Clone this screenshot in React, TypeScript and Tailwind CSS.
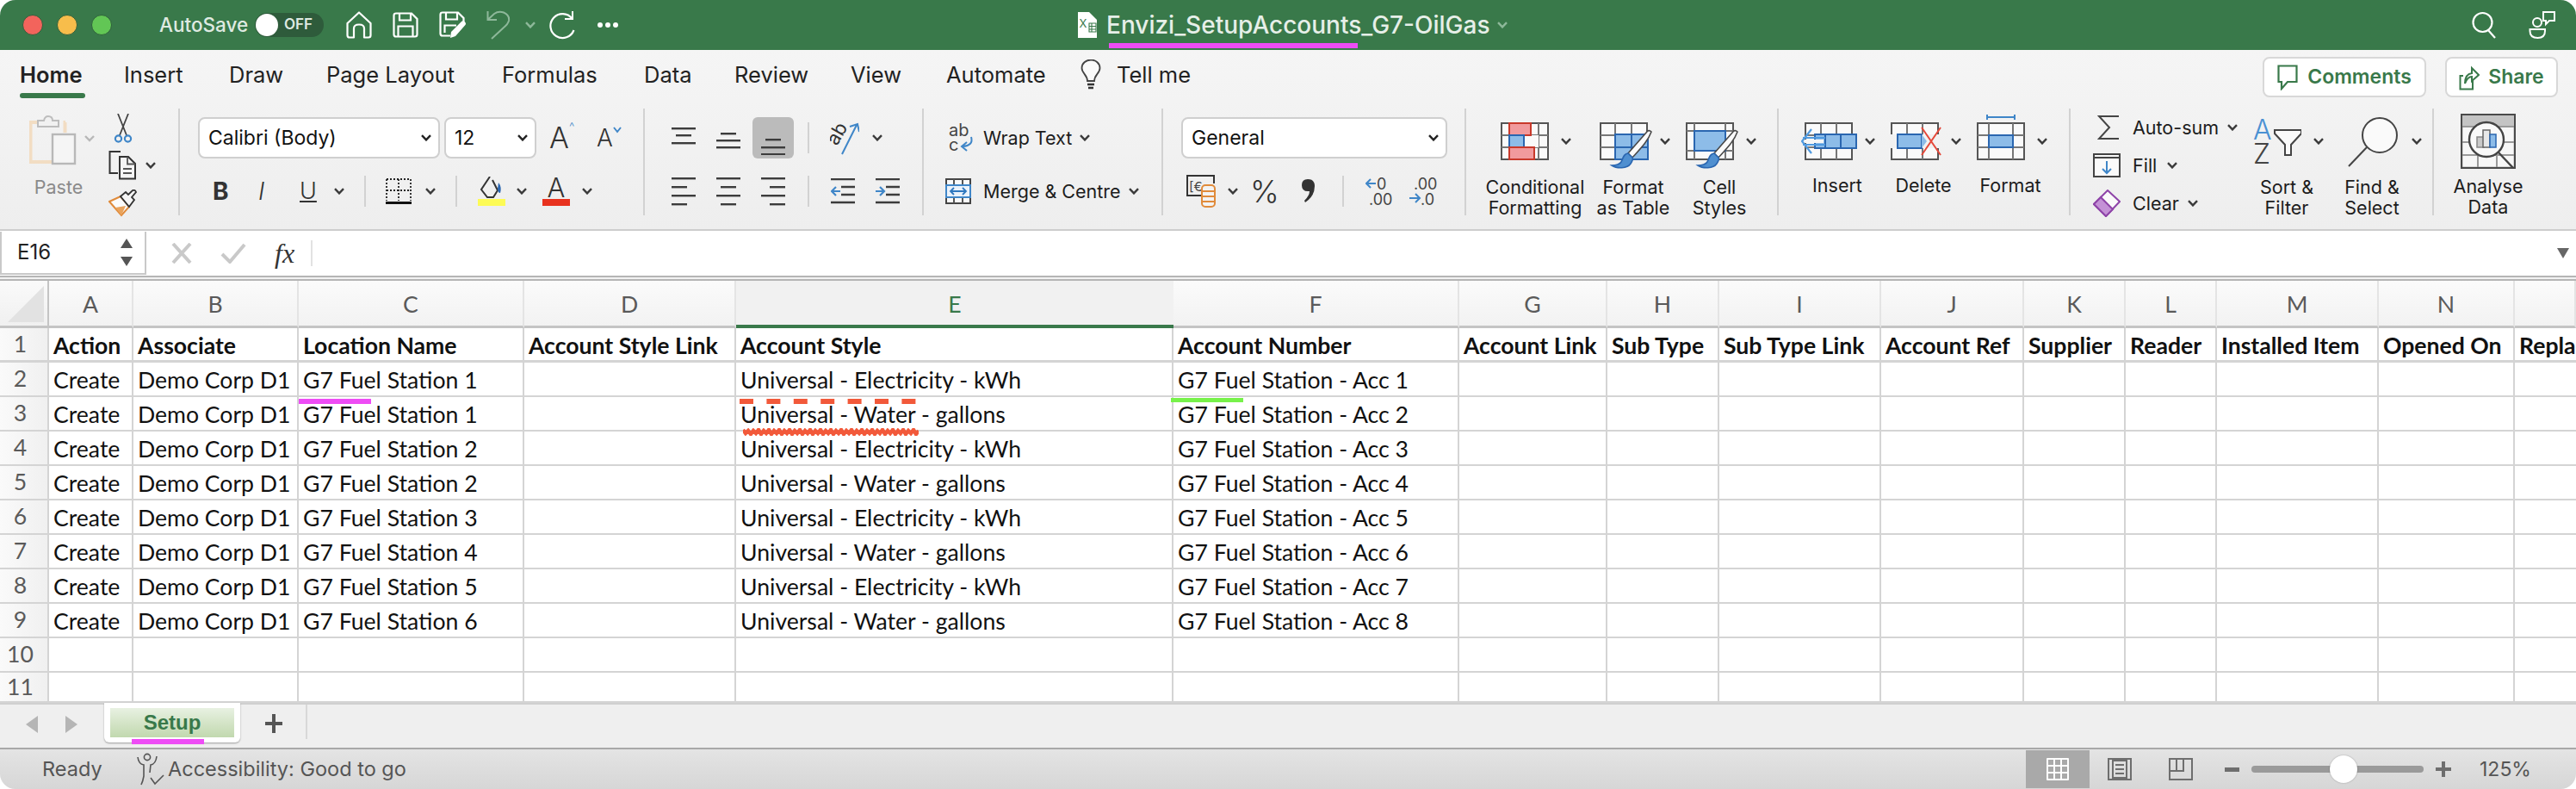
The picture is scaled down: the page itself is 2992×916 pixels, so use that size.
import React from "react";

const Chev = ({ c = "#3a3a3a", className = "" }: { c?: string; className?: string }) => (
  <svg width="12" height="8" viewBox="0 0 12 8" className={"shrink-0 " + className}>
    <path d="M1 1.2 L6 6.4 L11 1.2" fill="none" stroke={c} strokeWidth="2.4" />
  </svg>
);

const Lines = ({ ys, ws, align }: { ys: number[]; ws: number[]; align: "l" | "c" | "r" }) => (
  <svg width="28" height="40" viewBox="0 0 28 40" className="shrink-0">
    {ys.map((y, i) => {
      const x = align === "l" ? 0 : align === "c" ? (28 - ws[i]) / 2 : 28 - ws[i];
      return <rect key={i} x={x} y={y} width={ws[i]} height="2.4" fill="#3c3c3c" />;
    })}
  </svg>
);

const GridBase = ({ rows = [15, 29], cols = [10, 28, 46] }: { rows?: number[]; cols?: number[] }) => (
  <>
    <rect x="1" y="1" width="54" height="42" fill="#fafafa" stroke="#555" strokeWidth="2" />
    {rows.map((r) => <path key={r} d={`M1 ${r} H55`} stroke="#777" strokeWidth="2" />)}
    {cols.map((c) => <path key={c} d={`M${c} 1 V43`} stroke="#777" strokeWidth="2" />)}
  </>
);

const Brush = ({ x = 0 }: { x?: number }) => (
  <g transform={`translate(${x} 0)`}>
    <path d="M60 11 C58 9 56 9 54 12 L33 36 L38 41 C48 30 56 22 60 11 Z" fill="#fbfbfb" stroke="#4a4a4a" strokeWidth="1.6" />
    <path d="M33 36 C28 36 27 42 25 46 C23 49 19 50 14 50 C20 54 32 54 36 48 C38 45 39 43 38 41 Z" fill="#4f8fd0" stroke="#2a66b0" strokeWidth="1.6" />
  </g>
);

const IconHome = () => (
  <svg width="30" height="32" viewBox="0 0 30 32" className="shrink-0">
    <path d="M1.5 14 L15 1.5 L28.5 14 V28 Q28.5 30.5 26 30.5 H21 V20 Q21 15.5 15 15.5 Q9 15.5 9 20 V30.5 H4 Q1.5 30.5 1.5 28 Z" fill="none" stroke="#fff" strokeWidth="2.2" strokeLinejoin="round" />
  </svg>
);
const IconSave = () => (
  <svg width="30" height="30" viewBox="0 0 30 30" className="shrink-0">
    <path d="M4 1.5 H22 L28.5 8 V26 Q28.5 28.5 26 28.5 H4 Q1.5 28.5 1.5 26 V4 Q1.5 1.5 4 1.5 Z" fill="none" stroke="#fff" strokeWidth="2.2" />
    <path d="M8 1.5 V9.5 H21 V1.5 M6.5 28.5 V16.5 H23.5 V28.5" fill="none" stroke="#fff" strokeWidth="2.2" />
  </svg>
);
const IconSaveAs = () => (
  <svg width="32" height="32" viewBox="0 0 32 32" className="shrink-0">
    <path d="M13 28.5 H4 Q1.5 28.5 1.5 26 V4 Q1.5 1.5 4 1.5 H22 L28.5 8 V13" fill="none" stroke="#fff" strokeWidth="2.2" />
    <path d="M8 1.5 V9.5 H21 V1.5 M6.5 25 V16.5 H20" fill="none" stroke="#fff" strokeWidth="2.2" />
    <path d="M14 24 L26 12 Q28 10.5 30 12.5 Q32 14.5 30 16.5 L19 29 L13 31 Z" fill="#fff" />
  </svg>
);
const IconUndo = () => (
  <svg width="28" height="34" viewBox="0 0 28 34" className="shrink-0">
    <path d="M1.5 1 V11 H12 M2 10.5 L9 4 Q14 0.5 20 2.5 Q27 5.5 26 12 Q25 16 20 20 L6 33" fill="none" stroke="#8eb89a" strokeWidth="2" />
  </svg>
);
const IconRedo = () => (
  <svg width="32" height="34" viewBox="0 0 32 34" className="shrink-0">
    <path d="M28 1 V10 H19" fill="none" stroke="#fff" strokeWidth="2" />
    <path d="M27.5 9.5 A14 14 0 1 0 29.5 23" fill="none" stroke="#fff" strokeWidth="2.2" />
  </svg>
);
const IconDoc = () => (
  <svg width="26" height="30" viewBox="0 0 26 30" className="shrink-0">
    <path d="M2 0 H15 L24 9 V30 H2 Z" fill="#fff" />
    <text x="3.5" y="18" fontSize="13" fill="#39794a" fontFamily="Inter, sans-serif">X</text>
    <path d="M15 13 H23 V23 H15 Z M18 13 V23 M15 16.5 H23 M15 20 H23" fill="none" stroke="#39794a" strokeWidth="1.1" />
  </svg>
);
const IconSearch = () => (
  <svg width="30" height="32" viewBox="0 0 30 32" className="shrink-0">
    <circle cx="12.5" cy="13" r="11" fill="none" stroke="#fff" strokeWidth="2.2" />
    <path d="M19 22 L27 31" stroke="#fff" strokeWidth="2.2" />
  </svg>
);
const IconPeople = () => (
  <svg width="32" height="32" viewBox="0 0 32 32" className="shrink-0">
    <circle cx="10" cy="13" r="5" fill="none" stroke="#fff" strokeWidth="2" />
    <path d="M1.5 21 H19 V23 Q19 31 10.5 31 Q1.5 31 1.5 23 Z" fill="none" stroke="#fff" strokeWidth="2" />
    <path d="M17 1 H30 V11 H24 L20 15 V11 H17 Z" fill="none" stroke="#fff" strokeWidth="2" />
  </svg>
);

const IconPaste = () => (
  <svg width="76" height="62" viewBox="0 0 76 62" className="shrink-0 self-start">
    <path d="M10 8 H1.5 V54 H27" fill="none" stroke="#f2ddc3" strokeWidth="4" />
    <path d="M42 8 H41.5 V20" fill="none" stroke="#f2ddc3" strokeWidth="4" />
    <path d="M10 4 H17 Q18 -1 22 -1 Q27 -1 27 4 H34 V11 H10 Z" transform="translate(0 2)" fill="#f1f1f1" stroke="#bdbdbd" strokeWidth="2" />
    <rect x="27" y="22" width="26" height="34" fill="#f5f5f5" stroke="#b8b8b8" strokeWidth="2.4" />
    <path d="M65 24 L70 29 L75 24" fill="none" stroke="#b8b8b8" strokeWidth="2.4" />
  </svg>
);
const IconScissors = () => (
  <svg width="22" height="34" viewBox="0 0 22 34" className="shrink-0">
    <path d="M5 0 L15 25 M17 0 L7 25" stroke="#444" strokeWidth="1.8" fill="none" />
    <circle cx="5.5" cy="29" r="3.6" fill="none" stroke="#3f86c8" strokeWidth="2.2" />
    <circle cx="16.5" cy="29" r="3.6" fill="none" stroke="#3f86c8" strokeWidth="2.2" />
  </svg>
);
const IconCopy = () => (
  <svg width="32" height="34" viewBox="0 0 32 34" className="shrink-0">
    <path d="M14 1 H1.5 V26 H11" fill="none" stroke="#333" strokeWidth="2" />
    <path d="M13 7 H23 L31 15 V32.5 H13 Z" fill="#f5f5f5" stroke="#333" strokeWidth="2" />
    <path d="M22 7 V15.5 H31 M17 21 H27 M17 26 H27" fill="none" stroke="#555" strokeWidth="1.8" />
  </svg>
);
const IconPainter = () => (
  <svg width="34" height="32" viewBox="0 0 34 32" className="shrink-0">
    <path d="M1 14 L14 8 L24 20 L15 30 Z" fill="#fbfbfb" stroke="#e08b3b" strokeWidth="2" />
    <path d="M8 21 L20 19 L15 30 Z" fill="#e9a35c" />
    <path d="M14 8 L20 3 L23 6 L28 1 Q31 0 32 3 L27 9 L30 12 L24 20 Z" fill="#f5f5f5" stroke="#333" strokeWidth="1.8" />
  </svg>
);
const IconBorders = () => (
  <svg width="30" height="30" viewBox="0 0 30 30" className="shrink-0">
    <path d="M1 1 H29 V26 M1 1 V26 M15 1 V26 M1 14 H29" fill="none" stroke="#222" strokeWidth="1.8" strokeDasharray="2 2" />
    <rect x="0" y="27" width="30" height="3" fill="#111" />
  </svg>
);
const IconFill = () => (
  <svg width="32" height="34" viewBox="0 0 32 34" className="shrink-0">
    <path d="M14 0 L4 15 L11 24 H18 L23 16 L17 4" fill="none" stroke="#333" strokeWidth="2" />
    <path d="M24 7 Q28 12 26 19 Q23 19 23 14 Z" fill="#2a66b0" />
    <rect x="0" y="26" width="32" height="8" fill="#fdfb55" />
  </svg>
);
const IconOrient = () => (
  <svg width="34" height="42" viewBox="0 0 34 42" className="shrink-0">
    <text x="0" y="0" fontSize="22" fill="#333" fontFamily="Inter, sans-serif" transform="translate(8 31) rotate(-60)">ab</text>
    <path d="M14 40 L31 6 M23 8 L32 5 L34 14" fill="none" stroke="#3f86c8" strokeWidth="2" />
  </svg>
);
const IconIndent = ({ out }: { out?: boolean }) => (
  <svg width="28" height="30" viewBox="0 0 28 30" className="shrink-0">
    <path d="M0 1 H28 M12 10 H28 M12 19 H28 M0 28 H28" stroke="#3c3c3c" strokeWidth="2.4" />
    {out ? (
      <path d="M11 15 H1 M6 10 L1 15 L6 20" fill="none" stroke="#3f86c8" strokeWidth="2.2" />
    ) : (
      <path d="M0 15 H10 M5 10 L10 15 L5 20" fill="none" stroke="#3f86c8" strokeWidth="2.2" />
    )}
  </svg>
);
const IconWrap = () => (
  <svg width="30" height="34" viewBox="0 0 30 34" className="shrink-0">
    <text x="0" y="15" fontSize="20" fill="#444" fontFamily="Inter, sans-serif">ab</text>
    <text x="0" y="32" fontSize="20" fill="#444" fontFamily="Inter, sans-serif">c</text>
    <path d="M26 16 Q29 26 16 27 M21 22 L15 27 L21 32" fill="none" stroke="#3f86c8" strokeWidth="2" />
  </svg>
);
const IconMerge = () => (
  <svg width="30" height="30" viewBox="0 0 30 30" className="shrink-0">
    <rect x="1" y="1" width="28" height="28" fill="#fafafa" stroke="#444" strokeWidth="2" />
    <path d="M10 1 V8 M20 1 V8 M10 22 V29 M20 22 V29" stroke="#555" strokeWidth="2" />
    <rect x="1" y="8" width="28" height="14" fill="#eaf2fb" stroke="#3f86c8" strokeWidth="2" />
    <path d="M6 15 H24 M10 11 L6 15 L10 19 M20 11 L24 15 L20 19" fill="none" stroke="#2f78bf" strokeWidth="1.8" />
  </svg>
);
const IconAccounting = () => (
  <svg width="34" height="38" viewBox="0 0 34 38" className="shrink-0">
    <path d="M22 24 H1 V1 H32 V10" fill="none" stroke="#333" strokeWidth="2" />
    <text x="3" y="19" fontSize="15" fill="#444" fontFamily="Inter, sans-serif">[€</text>
    <rect x="18" y="12" width="15" height="25" rx="4" fill="#f3f3f3" stroke="#e08b3b" strokeWidth="2" />
    <path d="M18 19 H33 M18 25 H33 M18 31 H33" stroke="#e08b3b" strokeWidth="2" />
  </svg>
);
const IconComma = () => (
  <svg width="18" height="30" viewBox="0 0 18 30" className="shrink-0">
    <path d="M8 1 Q16 1 16 9 Q16 21 5 28 L4 26 Q10 20 10 15 Q1 16 1 8 Q1 1 8 1 Z" fill="#333" />
  </svg>
);
const IconDecInc = () => (
  <svg width="32" height="34" viewBox="0 0 32 34" className="shrink-0">
    <path d="M12 8 H1 M6 3 L1 8 L6 13" fill="none" stroke="#3f86c8" strokeWidth="2" />
    <text x="13" y="15" fontSize="18" fill="#444" fontFamily="Inter, sans-serif">0</text>
    <text x="4" y="33" fontSize="18" fill="#444" fontFamily="Inter, sans-serif">.00</text>
  </svg>
);
const IconDecDec = () => (
  <svg width="34" height="34" viewBox="0 0 34 34" className="shrink-0">
    <text x="6" y="15" fontSize="18" fill="#444" fontFamily="Inter, sans-serif">.00</text>
    <path d="M1 25 H13 M8 20 L13 25 L8 30" fill="none" stroke="#3f86c8" strokeWidth="2" />
    <text x="14" y="33" fontSize="18" fill="#444" fontFamily="Inter, sans-serif">.0</text>
  </svg>
);
const IconCF = () => (
  <svg width="56" height="44" viewBox="0 0 56 44" className="shrink-0">
    <GridBase rows={[15, 29]} cols={[10, 44]} />
    <rect x="27" y="15" width="17" height="14" fill="#fafafa" />
    <rect x="10" y="1" width="25" height="14" fill="#f19a9d" stroke="#c8392b" strokeWidth="2" />
    <rect x="10" y="15" width="17" height="14" fill="#8dbce8" stroke="#2a66b0" strokeWidth="2" />
    <rect x="10" y="29" width="29" height="14" fill="#f19a9d" stroke="#c8392b" strokeWidth="2" />
  </svg>
);
const IconFT = () => (
  <svg width="62" height="54" viewBox="0 0 62 54" className="shrink-0">
    <GridBase rows={[15, 29]} cols={[18, 37]} />
    <rect x="18" y="14" width="38" height="29" fill="#8dbce8" stroke="#2a66b0" strokeWidth="2" />
    <path d="M18 29 H56 M37 14 V43" stroke="#2a66b0" strokeWidth="2" />
    <Brush />
  </svg>
);
const IconCS = () => (
  <svg width="62" height="54" viewBox="0 0 62 54" className="shrink-0">
    <GridBase rows={[10, 33]} cols={[10, 46]} />
    <rect x="10" y="10" width="36" height="23" fill="#8dbce8" stroke="#2a66b0" strokeWidth="2" />
    <Brush />
  </svg>
);
const IconInsert = () => (
  <svg width="66" height="44" viewBox="0 0 66 44" className="shrink-0">
    <g transform="translate(4 0)"><GridBase rows={[15, 29]} cols={[19, 37]} /></g>
    <rect x="16" y="14" width="48" height="16" fill="#8dbce8" stroke="#2a66b0" strokeWidth="2" />
    <path d="M28 14 V30 M46 14 V30" stroke="#2a66b0" strokeWidth="2" />
    <path d="M12 8 L1 22 L12 36 M2 18 H28 M2 26 H28" fill="none" stroke="#4f9ae0" strokeWidth="2.2" />
    <path d="M4 22 H26" stroke="#f5f5f5" strokeWidth="4" />
  </svg>
);
const IconDelete = () => (
  <svg width="60" height="44" viewBox="0 0 60 44" className="shrink-0">
    <path d="M1 14 V1 H55 V14 M1 30 V43 H55 V30" fill="#fafafa" stroke="#555" strokeWidth="2" />
    <path d="M19 1 V14 M37 1 V14 M19 30 V43 M37 30 V43" stroke="#777" strokeWidth="2" />
    <rect x="8" y="14" width="28" height="16" fill="#8dbce8" stroke="#2a66b0" strokeWidth="2" />
    <path d="M36 14 L42 22 L36 30 Z" fill="#8dbce8" />
    <path d="M36 6 L58 38 M58 6 L36 38" stroke="#e5493a" strokeWidth="2" />
  </svg>
);
const IconFormat = () => (
  <svg width="56" height="54" viewBox="0 0 56 54" className="shrink-0">
    <path d="M12 1 V7 M44 1 V7 M12 4 H44" stroke="#3f86c8" strokeWidth="2" />
    <g transform="translate(0 10)">
      <GridBase rows={[15, 29]} cols={[14, 42]} />
      <rect x="14" y="15" width="28" height="14" fill="#8dbce8" stroke="#2a66b0" strokeWidth="2" />
    </g>
  </svg>
);
const IconSigma = () => (
  <svg width="26" height="30" viewBox="0 0 26 30" className="shrink-0">
    <path d="M25 2 H2 L14 15 L2 28 H25" fill="none" stroke="#444" strokeWidth="2" />
  </svg>
);
const IconFillDown = () => (
  <svg width="32" height="28" viewBox="0 0 32 28" className="shrink-0">
    <rect x="1" y="1" width="30" height="26" fill="#fafafa" stroke="#444" strokeWidth="2" />
    <path d="M1 5 H31" stroke="#444" strokeWidth="2" />
    <path d="M16 9 V23 M11 18 L16 23 L21 18" fill="none" stroke="#3f86c8" strokeWidth="2" />
  </svg>
);
const IconClear = () => (
  <svg width="32" height="32" viewBox="0 0 32 32" className="shrink-0">
    <path d="M17 1 L31 14 L15 31 L1 17 Z" fill="#fafafa" stroke="#8e44a8" strokeWidth="2" />
    <path d="M1 17 L9 9 L23 23 L15 31 Z" fill="#c491d6" stroke="#8e44a8" strokeWidth="2" />
  </svg>
);
const IconSort = () => (
  <svg width="56" height="54" viewBox="0 0 56 54" className="shrink-0">
    <text x="0" y="26" fontSize="32" fill="#4a90d2" fontFamily="Inter, sans-serif" fontWeight="300">A</text>
    <text x="0" y="54" fontSize="32" fill="#444" fontFamily="Inter, sans-serif" fontWeight="300">Z</text>
    <path d="M25 15 H56 V19 L44 32 V44 H37 V32 L25 19 Z" fill="#fafafa" stroke="#444" strokeWidth="2" />
  </svg>
);
const IconFind = () => (
  <svg width="60" height="58" viewBox="0 0 60 58" className="shrink-0">
    <circle cx="37" cy="21" r="20" fill="#fafafa" stroke="#444" strokeWidth="2" />
    <path d="M22 35 L1 57" stroke="#444" strokeWidth="2" />
  </svg>
);
const IconAnalyse = () => (
  <svg width="64" height="64" viewBox="0 0 64 64" className="shrink-0">
    <rect x="1" y="1" width="62" height="62" fill="#f7f7f7" stroke="#4a4a4a" strokeWidth="2.4" />
    <rect x="2" y="2" width="60" height="13" fill="#c4c4c4" />
    <path d="M2 15 H62 M2 33 H62 M2 48 H62 M20 15 V62 M42 15 V62" stroke="#9a9a9a" strokeWidth="2" />
    <circle cx="30" cy="30" r="20" fill="#f9f9f9" stroke="#444" strokeWidth="2.4" />
    <rect x="19" y="27" width="8" height="12" fill="#c9c9c9" stroke="#888" strokeWidth="1.5" />
    <rect x="26" y="19" width="8" height="20" fill="#e8e8e8" stroke="#666" strokeWidth="1.5" />
    <rect x="34" y="24" width="7" height="15" fill="#8dbce8" stroke="#2a66b0" strokeWidth="1.5" />
    <path d="M44 45 L62 64" stroke="#444" strokeWidth="2.4" />
  </svg>
);
const IconBulb = () => (
  <svg width="24" height="36" viewBox="0 0 24 36" className="shrink-0">
    <path d="M8 25 C8 18 1.5 16 1.5 10 A10.5 9.5 0 0 1 22.5 10 C22.5 16 16 18 16 25 Z" fill="#fafafa" stroke="#444" strokeWidth="1.8" />
    <path d="M8 29 H16 M9 33 H15" stroke="#333" strokeWidth="2.4" />
  </svg>
);
const IconComment = () => (
  <svg width="24" height="30" viewBox="0 0 24 30" className="shrink-0">
    <path d="M1.5 1.5 H22.5 V20 H12 L5 28 V20 H1.5 Z" fill="#fff" stroke="#39794a" strokeWidth="2.2" />
  </svg>
);
const IconShare = () => (
  <svg width="24" height="30" viewBox="0 0 24 30" className="shrink-0">
    <path d="M16 13 V28.5 H1.5 V13 H5" fill="none" stroke="#39794a" strokeWidth="2" />
    <path d="M7 22 Q7 11 15 10 V4 L23 12 L15 19 V14 Q10 14 7 22 Z" fill="#fff" stroke="#39794a" strokeWidth="2" />
  </svg>
);
const IconA11y = () => (
  <svg width="34" height="40" viewBox="0 0 34 40" className="shrink-0">
    <circle cx="13" cy="6" r="3.6" fill="none" stroke="#555" strokeWidth="1.6" />
    <path d="M2 6 Q3 14 9 15 L9 28 Q8 34 6 38 M24 5 Q23 14 17 15 L16 24" fill="none" stroke="#555" strokeWidth="1.6" />
    <path d="M17 30 L22 37 L32 27" fill="none" stroke="#555" strokeWidth="1.6" />
  </svg>
);

const Sep = () => <div className="w-[2px] h-[36px] bg-[#d2d2d2] shrink-0" />;

const Select = ({ w, label }: { w: string; label: string }) => (
  <div className={`${w} h-[48px] bg-white border-2 border-[#cfcfcf] rounded-[8px] flex items-center justify-between pl-[10px] pr-[8px] text-[23px] text-[#111] shrink-0`}>
    <span>{label}</span>
    <Chev c="#222" />
  </div>
);

const Ribbon = () => (
  <div className="flex h-[124px] text-[21.5px] text-[#1c1c1c] leading-[24px]">
    {/* Clipboard */}
    <div className="flex w-[209px] border-r-2 border-[#d2d2d2] shrink-0">
      <div className="ml-[34px] w-[68px] flex flex-col items-center pt-[8px]">
        <IconPaste />
        <span className="mt-[9px] text-[#8a8a8a]">Paste</span>
      </div>
      <div className="ml-[24px] flex flex-col">
        <div className="ml-[6px] mt-[6px] h-[44px] shrink-0"><IconScissors /></div>
        <div className="flex items-center h-[32px] shrink-0">
          <IconCopy />
          <Chev className="ml-[11px]" />
        </div>
        <div className="mt-[12px]"><IconPainter /></div>
      </div>
    </div>
    {/* Font */}
    <div className="flex flex-col w-[540px] border-r-2 border-[#d2d2d2] shrink-0">
      <div className="flex items-center h-[48px] mt-[10px]">
        <Select w="ml-[21px] w-[281px]" label="Calibri (Body)" />
        <Select w="ml-[5px] w-[107px]" label="12" />
        <div className="ml-[15px] w-[30px] flex items-start text-[34px] font-light leading-[40px] text-[#333]">A<span className="text-[14px] leading-[14px] text-[#3f86c8]">^</span></div>
        <div className="ml-[25px] w-[30px] flex items-start text-[28px] font-light leading-[40px] text-[#333]">A<svg width="10" height="10" viewBox="0 0 10 10" className="mt-[6px]"><path d="M1 2 L5 7 L9 2" fill="none" stroke="#3f86c8" strokeWidth="2" /></svg></div>
      </div>
      <div className="flex items-center h-[36px] mt-[20px]">
        <span className="ml-[38px] w-[16px] text-[28px] font-bold text-[#333]">B</span>
        <span className="ml-[37px] w-[12px] text-[28px] italic font-light text-[#333]">I</span>
        <span className="ml-[36px] w-[18px] text-[27px] font-light underline text-[#333]">U</span>
        <Chev className="ml-[22px]" />
        <div className="ml-[23px]"><Sep /></div>
        <div className="ml-[23px]"><IconBorders /></div>
        <Chev className="ml-[16px]" />
        <div className="ml-[23px]"><Sep /></div>
        <div className="ml-[24px]"><IconFill /></div>
        <Chev className="ml-[13px]" />
        <div className="ml-[18px] w-[32px] flex flex-col items-center">
          <span className="text-[31px] font-light leading-[26px] h-[26px] text-[#333]">A</span>
          <div className="w-[32px] h-[8px] bg-[#e8321f]" />
        </div>
        <Chev className="ml-[14px]" />
      </div>
    </div>
    {/* Alignment */}
    <div className="flex flex-col w-[324px] border-r-2 border-[#d2d2d2] shrink-0">
      <div className="flex items-center h-[48px] mt-[10px]">
        <div className="ml-[31px]"><Lines ys={[8, 16, 25]} ws={[28, 18, 28]} align="c" /></div>
        <div className="ml-[24px]"><Lines ys={[14, 22, 30]} ws={[18, 28, 28]} align="c" /></div>
        <div className="ml-[14px] w-[48px] h-[48px] rounded-[6px] bg-[#bbbbbb] flex items-center justify-center"><Lines ys={[21, 30, 38]} ws={[18, 28, 28]} align="c" /></div>
        <div className="ml-[16px]"><Sep /></div>
        <div className="ml-[24px]"><IconOrient /></div>
        <Chev className="ml-[15px]" />
      </div>
      <div className="flex items-center h-[36px] mt-[20px]">
        <div className="ml-[31px]"><Lines ys={[4, 14, 24, 34]} ws={[28, 18, 28, 18]} align="l" /></div>
        <div className="ml-[24px]"><Lines ys={[4, 14, 24, 34]} ws={[28, 18, 28, 18]} align="c" /></div>
        <div className="ml-[24px]"><Lines ys={[4, 14, 24, 34]} ws={[28, 18, 28, 18]} align="r" /></div>
        <div className="ml-[26px]"><Sep /></div>
        <div className="ml-[25px]"><IconIndent out /></div>
        <div className="ml-[24px]"><IconIndent /></div>
      </div>
    </div>
    {/* Wrap / merge */}
    <div className="flex flex-col w-[278px] border-r-2 border-[#d2d2d2] shrink-0">
      <div className="flex items-center h-[48px] mt-[10px]">
        <div className="ml-[29px]"><IconWrap /></div>
        <span className="ml-[10px] w-[112px]">Wrap Text</span>
        <Chev />
      </div>
      <div className="flex items-center h-[36px] mt-[20px]">
        <div className="ml-[25px]"><IconMerge /></div>
        <span className="ml-[14px] w-[169px]">Merge &amp; Centre</span>
        <Chev />
      </div>
    </div>
    {/* Number */}
    <div className="flex flex-col w-[352px] border-r-2 border-[#d2d2d2] shrink-0">
      <div className="flex items-center h-[48px] mt-[10px]">
        <Select w="ml-[21px] w-[309px]" label="General" />
      </div>
      <div className="flex items-center h-[36px] mt-[20px]">
        <div className="ml-[27px]"><IconAccounting /></div>
        <Chev className="ml-[14px]" />
        <span className="ml-[14px] w-[44px] text-[36px] font-light leading-[36px] text-[#333]">%</span>
        <div className="ml-[15px]"><IconComma /></div>
        <div className="ml-[30px]"><Sep /></div>
        <div className="ml-[25px]"><IconDecInc /></div>
        <div className="ml-[18px]"><IconDecDec /></div>
      </div>
    </div>
    {/* Styles */}
    <div className="flex w-[363px] border-r-2 border-[#d2d2d2] shrink-0 pl-[18px]">
      <div className="w-[124px] flex flex-col text-center pt-[16px]">
        <div className="flex items-center h-[54px] ml-[22px] pb-[10px] shrink-0"><IconCF /><Chev className="ml-[14px]" /></div>
        <span className="mt-[9px] whitespace-nowrap">Conditional<br />Formatting</span>
      </div>
      <div className="w-[104px] flex flex-col text-center pt-[16px]">
        <div className="flex items-start h-[54px] ml-[13px] shrink-0"><IconFT /><Chev className="ml-[8px] mt-[18px]" /></div>
        <span className="mt-[9px] whitespace-nowrap">Format<br />as Table</span>
      </div>
      <div className="w-[96px] flex flex-col text-center pt-[16px]">
        <div className="flex items-start h-[54px] ml-[9px] shrink-0"><IconCS /><Chev className="ml-[8px] mt-[18px]" /></div>
        <span className="mt-[9px] whitespace-nowrap">Cell<br />Styles</span>
      </div>
    </div>
    {/* Cells */}
    <div className="flex w-[339px] border-r-2 border-[#d2d2d2] shrink-0 pl-[18px]">
      <div className="w-[100px] flex flex-col text-center pt-[16px]">
        <div className="flex items-center h-[54px] ml-[8px] pb-[10px] shrink-0"><IconInsert /><Chev className="ml-[8px]" /></div>
        <span className="mt-[7px]">Insert</span>
      </div>
      <div className="w-[100px] flex flex-col text-center pt-[16px]">
        <div className="flex items-center h-[54px] ml-[12px] pb-[10px] shrink-0"><IconDelete /><Chev className="ml-[10px]" /></div>
        <span className="mt-[7px]">Delete</span>
      </div>
      <div className="w-[102px] flex flex-col text-center pt-[6px]">
        <div className="flex items-start h-[64px] ml-[12px] shrink-0"><IconFormat /><Chev className="ml-[14px] mt-[28px]" /></div>
        <span className="mt-[7px]">Format</span>
      </div>
    </div>
    {/* Editing */}
    <div className="flex w-[422px] border-r-2 border-[#d2d2d2] shrink-0 pl-[26px]">
      <div className="w-[177px] flex flex-col">
        <div className="flex items-center h-[44px] shrink-0">
          <div className="w-[46px] pl-[5px]"><IconSigma /></div>
          <span className="w-[110px]">Auto-sum</span><Chev />
        </div>
        <div className="flex items-center h-[44px] shrink-0">
          <div className="w-[46px]"><IconFillDown /></div>
          <span className="w-[40px]">Fill</span><Chev />
        </div>
        <div className="flex items-center h-[44px] shrink-0">
          <div className="w-[46px]"><IconClear /></div>
          <span className="w-[64px]">Clear</span><Chev />
        </div>
      </div>
      <div className="w-[96px] flex flex-col text-center pt-[10px]">
        <div className="flex items-start h-[60px] ml-[9px] shrink-0"><IconSort /><Chev className="ml-[14px] mt-[24px]" /></div>
        <span className="mt-[9px]">Sort &amp;<br />Filter</span>
      </div>
      <div className="w-[102px] flex flex-col text-center pt-[10px]">
        <div className="flex items-start h-[60px] ml-[23px] shrink-0"><IconFind /><Chev className="ml-[14px] mt-[24px]" /></div>
        <span className="mt-[9px]">Find &amp;<br />Select</span>
      </div>
    </div>
    {/* Analyse */}
    <div className="w-[126px] flex flex-col items-center pt-[6px] shrink-0">
      <IconAnalyse />
      <span className="mt-[8px] text-center">Analyse<br />Data</span>
    </div>
  </div>
);

const heads = [
  "Action", "Associate", "Location Name", "Account Style Link", "Account Style", "Account Number", "Account Link",
  "Sub Type", "Sub Type Link", "Account Ref", "Supplier", "Reader", "Installed Item", "Opened On", "Replaced On",
];
const letters = "ABCDEFGHIJKLMN".split("").concat("");
const rows = [
  ["Create", "Demo Corp D1", "G7 Fuel Station 1", "", "Universal - Electricity - kWh", "G7 Fuel Station - Acc 1"],
  ["Create", "Demo Corp D1", "G7 Fuel Station 1", "", "Universal - Water - gallons", "G7 Fuel Station - Acc 2"],
  ["Create", "Demo Corp D1", "G7 Fuel Station 2", "", "Universal - Electricity - kWh", "G7 Fuel Station - Acc 3"],
  ["Create", "Demo Corp D1", "G7 Fuel Station 2", "", "Universal - Water - gallons", "G7 Fuel Station - Acc 4"],
  ["Create", "Demo Corp D1", "G7 Fuel Station 3", "", "Universal - Electricity - kWh", "G7 Fuel Station - Acc 5"],
  ["Create", "Demo Corp D1", "G7 Fuel Station 4", "", "Universal - Water - gallons", "G7 Fuel Station - Acc 6"],
  ["Create", "Demo Corp D1", "G7 Fuel Station 5", "", "Universal - Electricity - kWh", "G7 Fuel Station - Acc 7"],
  ["Create", "Demo Corp D1", "G7 Fuel Station 6", "", "Universal - Water - gallons", "G7 Fuel Station - Acc 8"],
  ["", "", "", "", "", ""],
  ["", "", "", "", "", ""],
];

const Sheet = () => (
  <div className="grid grid-cols-[57px_98px_192px_262px_246px_508px_332px_172px_130px_188px_166px_118px_106px_188px_158px_71px] grid-rows-[55px_repeat(10,40px)_35px] bg-white font-[Lato,sans-serif] text-[26.6px] text-[#111] whitespace-nowrap shrink-0 h-[490px]">
    <div className="bg-gradient-to-b from-[#fafafa] to-[#f0f0f0] border-r-2 border-b-[3px] border-[#c4c4c4] flex items-end justify-end pb-[4px] pr-[4px]">
      <svg width="42" height="42" viewBox="0 0 42 42"><path d="M42 0 V42 H0 Z" fill="#e2e2e2" /></svg>
    </div>
    {letters.map((l, i) => (
      l === "E" ? (
        <div key={i} className="bg-[#f1f1f1] border-b-[4px] border-[#39794a] flex items-center justify-center text-[#39794a] pt-[4px]">{l}</div>
      ) : (
        <div key={i} className="bg-gradient-to-b from-[#fbfbfb] to-[#f2f2f2] border-r-2 border-[#e4e4e4] border-b-[3px] border-b-[#c4c4c4] flex items-center justify-center text-[#5a5a5a] pt-[4px]">{l}</div>
      )
    ))}
    <div className="bg-gradient-to-r from-[#fafafa] to-[#f0f0f0] border-r-2 border-b-[3px] border-[#d4d4d4] flex items-center justify-center text-[#5a5a5a] pr-[8px]">1</div>
    {heads.map((h, i) => (
      <div key={h} className={"border-b-[3px] border-[#d4d4d4] font-bold pl-[5px] leading-[40px] " + (i === 14 ? "" : "border-r-2")}>{h}</div>
    ))}
    {rows.map((r, ri) => (
      <React.Fragment key={ri}>
        <div className="bg-gradient-to-r from-[#fafafa] to-[#f0f0f0] border-r-2 border-b-2 border-[#d4d4d4] flex items-center justify-center text-[#5a5a5a] pr-[8px]">{ri + 2}</div>
        {letters.map((_, ci) => (
          <div key={ci} className={"relative border-b-2 border-[#d4d4d4] pl-[5px] leading-[40px] " + (ci === 14 ? "" : "border-r-2")}>
            {r[ci] ?? ""}
            {ri === 1 && ci === 2 && <div className="absolute left-0 top-[2px] w-[84px] h-[6px] bg-[#ee4cf5]" />}
            {ri === 1 && ci === 4 && (
              <>
                <svg width="206" height="6" viewBox="0 0 206 6" className="absolute left-[4px] top-[2px]">
                  <path d="M0 3 H206" stroke="#f2593a" strokeWidth="6" strokeDasharray="16 15.4" />
                </svg>
                <svg width="204" height="9" viewBox="0 0 204 9" className="absolute left-[8px] top-[36px] z-10">
                  <path d="M0 2 L3 6 L6 3 L9 7 L12 3 L15 6 L18 2 L21 7 L24 3 L27 6 L30 2 L33 7 L36 3 L39 6 L42 2 L45 7 L48 3 L51 6 L54 2 L57 7 L60 3 L63 6 L66 2 L69 7 L72 3 L75 6 L78 2 L81 7 L84 3 L87 6 L90 2 L93 7 L96 3 L99 6 L102 2 L105 7 L108 3 L111 6 L114 2 L117 7 L120 3 L123 6 L126 2 L129 7 L132 3 L135 6 L138 2 L141 7 L144 3 L147 6 L150 2 L153 7 L156 3 L159 6 L162 2 L165 7 L168 3 L171 6 L174 2 L177 7 L180 3 L183 6 L186 2 L189 7 L192 3 L195 6 L198 2 L201 7 L204 3" fill="none" stroke="#f2593a" strokeWidth="4.5" />
                </svg>
              </>
            )}
            {ri === 1 && ci === 5 && <div className="absolute left-[-3px] top-[1px] w-[84px] h-[5px] bg-[#77f24a]" />}
          </div>
        ))}
      </React.Fragment>
    ))}
  </div>
);

const tabs: [string, string][] = [
  ["Insert", "w-[122px]"], ["Draw", "w-[113px]"], ["Page Layout", "w-[204px]"], ["Formulas", "w-[165px]"],
  ["Data", "w-[105px]"], ["Review", "w-[135px]"], ["View", "w-[111px]"], ["Automate", "w-[156px]"],
];

export default function App() {
  return (
    <div className="w-[2992px] h-[916px] bg-white overflow-hidden">
      <div className="w-[2992px] h-[916px] rounded-[18px] overflow-hidden bg-[#f2f2f2] flex flex-col font-[Inter,sans-serif]">
        {/* Title bar */}
        <div className="relative h-[58px] bg-[#39794a] flex items-center shrink-0">
          <div className="ml-[26px] w-[24px] h-[24px] rounded-full bg-[#f2645c] border border-[#2f5f3c]" />
          <div className="ml-[16px] w-[24px] h-[24px] rounded-full bg-[#f7bd4b] border border-[#2f5f3c]" />
          <div className="ml-[16px] w-[24px] h-[24px] rounded-full bg-[#62c655] border border-[#2f5f3c]" />
          <span className="ml-[55px] w-[111px] text-[22.5px] font-medium text-[#dfeae2]">AutoSave</span>
          <div className="w-[80px] h-[28px] rounded-full bg-[#2e5b3b] flex items-center shrink-0">
            <div className="w-[26px] h-[26px] rounded-full bg-white ml-[1px]" />
            <span className="ml-[7px] text-[17px] font-semibold text-[#dfeae2]">OFF</span>
          </div>
          <div className="ml-[26px]"><IconHome /></div>
          <div className="ml-[24px]"><IconSave /></div>
          <div className="ml-[24px]"><IconSaveAs /></div>
          <div className="ml-[23px]"><IconUndo /></div>
          <Chev c="#8eb89a" className="ml-[17px]" />
          <div className="ml-[15px]"><IconRedo /></div>
          <div className="ml-[25px] flex gap-[3px]">
            <div className="w-[6px] h-[6px] rounded-full bg-white" />
            <div className="w-[6px] h-[6px] rounded-full bg-white" />
            <div className="w-[6px] h-[6px] rounded-full bg-white" />
          </div>
          <div className="ml-[532px]"><IconDoc /></div>
          <span className="ml-[9px] text-[28px] font-medium text-[#e6efe8] whitespace-nowrap">Envizi_SetupAccounts_G7-OilGas</span>
          <Chev c="#8eb89a" className="ml-[8px]" />
          <div className="ml-auto"><IconSearch /></div>
          <div className="ml-[36px] mr-[23px]"><IconPeople /></div>
          <div className="absolute left-[1288px] top-[50px] w-[289px] h-[6px] bg-[#ee4cf5]" />
        </div>
        {/* Ribbon */}
        <div className="h-[210px] shrink-0 bg-gradient-to-b from-[#f5f5f5] to-[#eeeeee] border-b-2 border-[#cdcdcd]">
          <div className="flex h-[68px] items-start text-[25.5px] text-[#222]">
            <div className="ml-[23px] w-[121px] pt-[14px] leading-[30px]">
              <div className="w-[75px] font-semibold">Home</div>
              <div className="w-[76px] h-[6px] mt-[6px] rounded-full bg-[#39794a]" />
            </div>
            {tabs.map(([t, w]) => (
              <span key={t} className={`${w} pt-[14px] leading-[30px] shrink-0`}>{t}</span>
            ))}
            <div className="w-[42px] pt-[11px]"><IconBulb /></div>
            <span className="pt-[14px] leading-[30px]">Tell me</span>
            <div className="ml-auto mt-[8px] w-[190px] h-[47px] bg-white border-2 border-[#d8d8d8] rounded-[8px] flex items-center justify-center gap-[11px] text-[23px] font-semibold text-[#39794a]">
              <IconComment />Comments
            </div>
            <div className="ml-[22px] mr-[21px] mt-[8px] w-[131px] h-[47px] bg-white border-2 border-[#d8d8d8] rounded-[8px] flex items-center justify-center gap-[10px] text-[23px] font-semibold text-[#39794a]">
              <IconShare />Share
            </div>
          </div>
          <Ribbon />
        </div>
        {/* Formula bar */}
        <div className="h-[52px] bg-white flex items-center shrink-0">
          <div className="w-[170px] h-[50px] border-r-2 border-b-2 border-l-2 border-[#c9c9c9] flex items-center pl-[18px] pr-[14px] justify-between text-[24px] text-[#222]">
            E16
            <div className="flex flex-col gap-[10px]">
              <svg width="14" height="11" viewBox="0 0 14 11"><path d="M7 0 L14 11 H0 Z" fill="#555" /></svg>
              <svg width="14" height="11" viewBox="0 0 14 11"><path d="M7 11 L14 0 H0 Z" fill="#555" /></svg>
            </div>
          </div>
          <svg width="24" height="24" viewBox="0 0 24 24" className="ml-[29px]"><path d="M2 1 L22 23 M22 1 L2 23" stroke="#c9c9c9" strokeWidth="4" /></svg>
          <svg width="30" height="24" viewBox="0 0 30 24" className="ml-[33px]"><path d="M2 13 L11 22 L28 2" fill="none" stroke="#c9c9c9" strokeWidth="4" /></svg>
          <span className="ml-[33px] w-[42px] font-['Liberation_Serif',serif] italic text-[32px] text-[#333]">fx</span>
          <div className="w-[2px] h-[30px] bg-[#e2e2e2]" />
          <svg width="14" height="12" viewBox="0 0 14 12" className="ml-auto mr-[8px]"><path d="M0 0 H14 L7 12 Z" fill="#666" /></svg>
        </div>
        <div className="h-[6px] shrink-0 bg-[#f2f2f2] border-y-2 border-[#b5b5b5]" />
        {/* Sheet */}
        <Sheet />
        {/* Tabs */}
        <div className="h-[52px] shrink-0 bg-[#efefef] border-t-2 border-[#d0d0d0] flex items-start">
          <svg width="14" height="20" viewBox="0 0 14 20" className="ml-[30px] mt-[13px]"><path d="M14 0 V20 L0 10 Z" fill="#b5b5b5" /></svg>
          <svg width="14" height="20" viewBox="0 0 14 20" className="ml-[32px] mt-[13px]"><path d="M0 0 V20 L14 10 Z" fill="#b5b5b5" /></svg>
          <div className="relative ml-[31px] -mt-[2px] w-[158px] h-[46px] bg-white rounded-b-[6px] shadow-[0_1px_2px_rgba(0,0,0,0.35)] px-[7px] pt-[6px]">
            <div className="h-[34px] bg-gradient-to-b from-[#e8f1e2] to-[#c1d8ae] flex items-center justify-center font-['Liberation_Sans',sans-serif] font-bold text-[24px] text-[#39794a]">Setup</div>
            <div className="absolute left-[32px] top-[42px] w-[84px] h-[6px] bg-[#ee4cf5]" />
          </div>
          <svg width="20" height="22" viewBox="0 0 20 22" className="ml-[29px] mt-[11px]"><path d="M10 0 V22 M0 11 H20" stroke="#555" strokeWidth="4" /></svg>
          <div className="ml-[27px] w-[2px] h-[40px] bg-[#d8d8d8]" />
        </div>
        {/* Status bar */}
        <div className="flex-1 bg-gradient-to-b from-[#e4e4e4] to-[#d6d6d6] border-t-2 border-[#a8a8a8] flex items-center text-[23.5px] text-[#555]">
          <span className="ml-[49px] w-[109px]">Ready</span>
          <IconA11y />
          <span className="ml-[3px]">Accessibility: Good to go</span>
          <div className="ml-auto w-[74px] h-[44px] bg-[#a9a9a9] flex items-center justify-center">
            <svg width="26" height="26" viewBox="0 0 26 26"><rect width="26" height="26" rx="1" fill="#fff" /><path d="M2 2 H8 V8 H2 Z M10 2 H16 V8 H10 Z M18 2 H24 V8 H18 Z M2 10 H8 V16 H2 Z M10 10 H16 V16 H10 Z M18 10 H24 V16 H18 Z M2 18 H8 V24 H2 Z M10 18 H16 V24 H10 Z M18 18 H24 V24 H18 Z" fill="#a9a9a9" /></svg>
          </div>
          <svg width="28" height="26" viewBox="0 0 28 26" className="ml-[21px]"><rect x="1" y="1" width="26" height="24" fill="none" stroke="#6e6e6e" strokeWidth="2" /><path d="M6 3 V23 H22 V3 Z M9 8 H19 M9 13 H19 M9 18 H19" fill="none" stroke="#6e6e6e" strokeWidth="2" /></svg>
          <svg width="28" height="26" viewBox="0 0 28 26" className="ml-[43px]"><rect x="1" y="1" width="26" height="24" fill="none" stroke="#6e6e6e" strokeWidth="2" /><path d="M1 15 H17 V1 M9 1 V15" fill="none" stroke="#6e6e6e" strokeWidth="2" /></svg>
          <div className="ml-[37px] w-[17px] h-[5px] bg-[#6e6e6e]" />
          <div className="relative ml-[14px] w-[200px] h-[8px] rounded-full bg-[#9a9a9a]">
            <div className="absolute left-[91px] top-[-12px] w-[32px] h-[32px] rounded-full bg-white shadow-[0_0_2px_rgba(0,0,0,0.3)]" />
          </div>
          <svg width="18" height="18" viewBox="0 0 18 18" className="ml-[14px]"><path d="M9 0 V18 M0 9 H18" stroke="#6e6e6e" strokeWidth="4" /></svg>
          <span className="ml-[33px] mr-[50px] w-[62px] text-[23px]">125%</span>
        </div>
      </div>
    </div>
  );
}
